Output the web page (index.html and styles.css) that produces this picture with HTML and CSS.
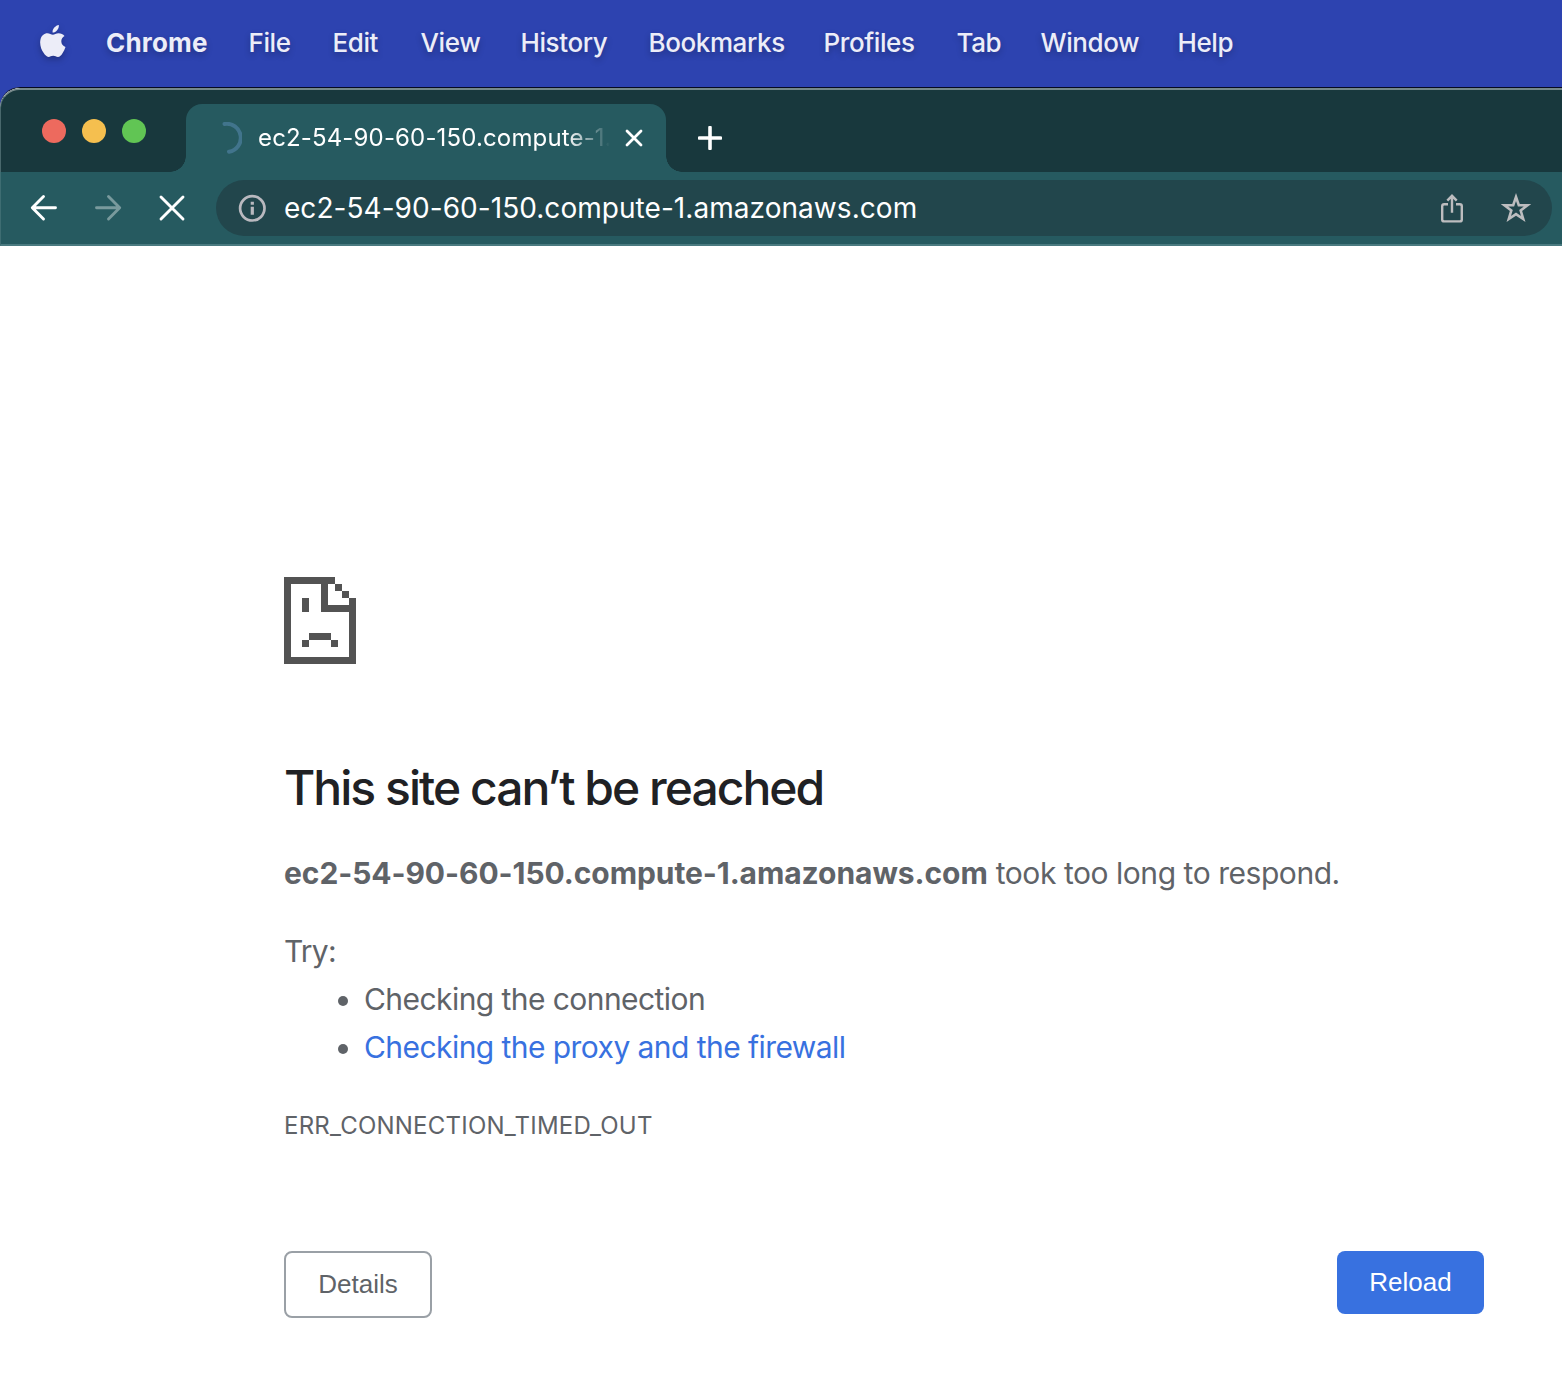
FILE: index.html
```html
<!DOCTYPE html>
<html lang="en">
<head>
<meta charset="utf-8">
<title>ec2-54-90-60-150.compute-1.amazonaws.com</title>
<link rel="stylesheet" href="styles.css">
</head>
<body>
<nav class="menubar">
  <svg class="apple" viewBox="0 0 26 32"><path d="M18.800 0c.3 1.900-.5 3.900-1.700 5.300-1.200 1.400-2.900 2.400-4.500 2.300-.3-1.800.6-3.800 1.700-5C15.500 1.200 17.300.2 18.800 0zM24.500 11c-2 1.200-3.200 3-3.200 5.300 0 2.700 1.600 4.800 4.200 5.800-.7 2.200-1.700 4.200-3 6.100-1.200 1.900-2.600 3.700-4.600 3.700-1.900 0-2.500-1.100-4.700-1.100-2.300 0-2.900 1.100-4.700 1.100-2 0-3.500-1.900-4.800-3.800C1 24.500-.6 19 .5 14.500c.9-3.900 3.700-6.200 6.900-6.200 2.100 0 3.800 1.400 5.500 1.400 1.500 0 3.100-1.500 5.700-1.500 2.300 0 4.500 1 5.900 2.800z"/></svg>
  <span class="app">Chrome</span><span>File</span><span>Edit</span><span>View</span><span>History</span><span>Bookmarks</span><span>Profiles</span><span>Tab</span><span>Window</span><span>Help</span>
</nav>
<div class="window">
  <header class="tabstrip">
    <div class="lights"><i class="light red"></i><i class="light yellow"></i><i class="light green"></i></div>
    <div class="tab">
      <svg class="spinner" viewBox="0 0 32 32"><path d="M14.500 2A14 14 0 0 1 19 29.700"/></svg>
      <span class="tab-title">ec2-54-90-60-150.compute-1.</span>
      <svg class="close" viewBox="0 0 18 18"><path d="M2 2 16 16M16 2 2 16"/></svg>
    </div>
    <svg class="plus" viewBox="0 0 24 24"><path d="M12 1.500V22.500M1.500 12H22.500"/></svg>
  </header>
  <div class="toolbar">
    <svg class="nav-icon" viewBox="0 0 28 28"><path d="M25.500 13.700H3M13.500 2.500 2.300 13.700 13.500 25"/></svg>
    <svg class="nav-icon disabled" viewBox="0 0 28 28"><path d="M2.500 13.700H25M14.500 2.500 25.700 13.700 14.500 25"/></svg>
    <svg class="nav-icon" viewBox="0 0 28 28"><path d="M3 3 25 25M25 3 3 25"/></svg>
    <div class="omnibox">
      <svg class="info" viewBox="0 0 28 28"><circle cx="14.300" cy="14.300" r="12.200"/><path class="info-mark" d="M14.300 12.800V20.800M14.300 7.800V10.800"/></svg>
      <span class="url">ec2-54-90-60-150.compute-1.amazonaws.com</span>
      <svg class="share" viewBox="0 0 24 30"><path d="M8 11.200H4.200Q2.200 11.200 2.200 13.200V26.400Q2.200 28.400 4.200 28.400H19.800Q21.800 28.400 21.800 26.400V13.200Q21.800 11.200 19.800 11.200H16M12 19.700V3.500M7.300 7.700 12 2.800 16.700 7.700"/></svg>
      <svg class="star" viewBox="0 0 30 30"><path d="M15 4 17.800 12.200 26.500 12.300 19.700 17.500 22.200 26 15 21.100 7.800 26 10.300 17.500 3.500 12.300 12.200 12.200z"/></svg>
    </div>
  </div>
  <main class="page">
    <svg class="sad" viewBox="0 0 72 87" shape-rendering="crispEdges"><path d="M0 0H51V7H44V28H65V21H72V87H0zM7 7V80H65V35H37V7zM51 7H58V14H51zM58 14H65V21H58zM18 21H25V35H18zM25 56H47V63H25zM18 63H25V70H18zM47 63H54V70H47z" fill-rule="evenodd"/></svg>
    <h1>This site can’t be reached</h1>
    <p class="summary"><strong>ec2-54-90-60-150.compute-1.amazonaws.com</strong> <span>took too long to respond.</span></p>
    <div class="try">Try:</div>
    <ul>
      <li><span class="tip">Checking the connection</span></li>
      <li><a class="tip" href="#">Checking the proxy and the firewall</a></li>
    </ul>
    <div class="code">ERR_CONNECTION_TIMED_OUT</div>
    <div class="buttons"><button class="details">Details</button><button class="reload">Reload</button></div>
  </main>
</div>
</body>
</html>
```
FILE: styles.css
```css
* { box-sizing: border-box; }
body { margin: 0; width: 1562px; height: 1390px; overflow: hidden; background: #2d43b0; font-family: Inter, "Liberation Sans", sans-serif; }
svg { display: block; flex: none; fill: none; stroke-linecap: round; stroke-linejoin: round; }
span, strong, a { white-space: nowrap; }

.menubar { height: 87px; padding-left: 40px; display: grid; grid-template-columns: 66px 142.500px 84px 88px 100px 128px 175px 133px 84px 137px 80px; align-items: center; color: #ecedf8; font-size: 26px; font-weight: 500; line-height: 84px; letter-spacing: -.4px; text-shadow: 0 3px 6px rgba(0,0,0,.25); }
.menubar span { margin-top: -2px; }
.app { font-weight: 700; letter-spacing: .2px; }
.apple { width: 26px; height: 32px; margin-top: -5px; fill: #ecedf8; filter: drop-shadow(0 3px 3px rgba(0,0,0,.25)); }

.window { height: 1303px; border-radius: 20px 0 0 0; overflow: hidden; background: #fff; border-top: 1px solid #060b20; }
.tabstrip { height: 84px; border-top: 2px solid #75898a; border-left: 1px solid #49686c; border-radius: 20px 0 0 0; background: #18383d; display: flex; align-items: flex-end; padding-left: 41px; }
.lights { display: flex; gap: 16px; width: 144px; padding-bottom: 29px; }
.light { width: 24px; height: 24px; border-radius: 50%; }
.red { background: #ed6a5e; }
.yellow { background: #f5bf4f; }
.green { background: #61c554; }
.tab { position: relative; width: 480px; height: 68px; background: #265a60; border-radius: 16px 16px 0 0; display: flex; align-items: center; padding-left: 24px; }
.tab::before, .tab::after { content: ""; position: absolute; bottom: 0; width: 16px; height: 16px; }
.tab::before { left: -16px; background: radial-gradient(circle at 0 0, transparent 15.500px, #265a60 16px); }
.tab::after { right: -16px; background: radial-gradient(circle at 100% 0, transparent 15.500px, #265a60 16px); }
.spinner { width: 32px; height: 32px; stroke: #41748c; stroke-width: 4; }
.tab-title { margin-left: 16px; width: 352px; overflow: hidden; color: #fff; font-size: 24px; line-height: 34px; letter-spacing: .15px; -webkit-mask-image: linear-gradient(90deg, #000 308px, transparent 352px); mask-image: linear-gradient(90deg, #000 308px, transparent 352px); }
.close { width: 18px; height: 18px; margin-left: 15px; stroke: #fff; stroke-width: 2.800; }
.plus { width: 24px; height: 24px; margin: 0 0 22px 32px; stroke: #fff; stroke-width: 3.600; }

.toolbar { height: 74px; background: #265a60; border-bottom: 2px solid #4a7a80; border-left: 1px solid #3e6d72; display: flex; align-items: center; gap: 36px; padding: 0 10px 0 29px; }
.nav-icon { width: 28px; height: 28px; stroke: #fff; stroke-width: 2.900; }
.disabled { stroke: #799a9d; }
.omnibox { flex: 1; margin-left: -6px; height: 56px; border-radius: 28px; background: #22464c; display: flex; align-items: center; padding: 0 21px 0 22px; }
.info { width: 28px; height: 28px; overflow: visible; stroke: #b9b9bf; stroke-width: 2.700; stroke-linecap: butt; }
.info-mark { stroke-width: 3.200; }
.url { margin-left: 18px; color: #fff; font-size: 28px; line-height: 40px; letter-spacing: .05px; }
.share { width: 24px; height: 30px; margin-left: auto; stroke: #bdbdbf; stroke-width: 2.400; stroke-linecap: butt; stroke-linejoin: miter; }
.star { width: 30px; height: 30px; margin-left: 37px; stroke: #bdbdbf; stroke-width: 2.600; stroke-linejoin: miter; }

.page { padding: 331px 78px 0 284px; color: #5f6368; font-size: 30px; line-height: 48px; }
.sad { width: 72px; height: 87px; fill: #535353; }
h1 { margin: 95px 0 0; color: #202124; font-size: 48px; line-height: 58px; font-weight: 500; letter-spacing: -1.980px; white-space: nowrap; }
.summary { margin: 32px 0 0; white-space: nowrap; letter-spacing: -.45px; }
.summary strong { font-weight: 700; letter-spacing: -.07px; }
.try { margin-top: 30px; letter-spacing: -.8px; }
ul { margin: 0; padding-left: 80px; list-style: none; letter-spacing: -.56px; }
li { height: 48px; position: relative; }
li::before { content: ""; position: absolute; left: -26px; top: 21px; width: 10px; height: 10px; border-radius: 50%; background: #5f6368; }
a { color: #3871e0; text-decoration: none; }
.code { margin-top: 37px; font-size: 24px; line-height: 36px; letter-spacing: .22px; }
.buttons { margin-top: 107px; display: flex; justify-content: space-between; align-items: flex-start; }
button { font-family: "Liberation Sans", Arial, sans-serif; font-size: 26px; padding: 0; border-radius: 8px; }
.details { width: 148px; height: 67px; border: 2px solid #9aa0a6; background: #fff; color: #5f6368; }
.reload { width: 147px; height: 63px; border: 0; background: #3871e0; color: #fff; }
```
